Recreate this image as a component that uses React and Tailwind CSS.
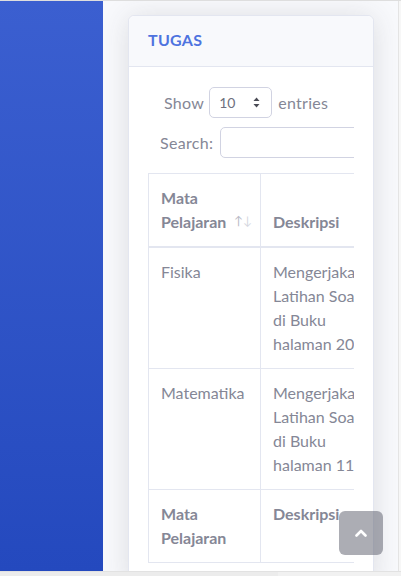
import React from "react";

function SortIcons() {
  return (
    <span className="absolute right-[8px] bottom-[19px] flex text-[12px] leading-none font-normal">
      <span className="text-[#b7b9c6]">↑</span>
      <span className="text-[#d6d8e1]">↓</span>
    </span>
  );
}

function Lines({ lines }) {
  return (
    <div>
      {lines.map((l, i) => (
        <div key={i} className="whitespace-nowrap">
          {l}
        </div>
      ))}
    </div>
  );
}

export default function App() {
  const font = { fontFamily: "Lato, 'Noto Sans', 'Liberation Sans', sans-serif" };
  return (
    <div
      className="w-[401px] h-[576px] overflow-hidden flex flex-col border-t border-[#dedede] bg-[#f8f9fc] text-[16px] text-[#858796]"
      style={font}
    >
      <div className="flex flex-1 min-h-0 relative">
        <div className="w-[103px] shrink-0 bg-gradient-to-b from-[#3b5fd0] to-[#2449be]" />
        <div className="flex-1 min-w-0 flex">
          <div className="flex-1 min-w-0 pl-[25px] pr-[24px] pt-[14px] overflow-hidden">
            <div className="w-[246px] bg-white rounded-[6px] border border-[#e3e6f0] shadow-[0_0.15rem_1.75rem_0_rgba(58,59,69,0.15)]">
              <div className="bg-[#f8f9fc] border-b border-[#e3e6f0] rounded-t-[6px] px-[19px] pt-[11px] pb-[13px] leading-[26px]">
                <span className="text-[#4e73df] font-bold text-[16px] tracking-[0.3px]">TUGAS</span>
              </div>
              <div className="px-[19px] pt-[20px] pb-[20px]">
                <div className="w-[206px] overflow-hidden">
                  <div className="flex items-center pl-[16px] h-[31px]">
                    <span className="tracking-[0.3px]">Show</span>
                    <div className="ml-[5px] w-[63px] h-[31px] border border-[#d1d3e2] rounded-[5px] flex items-center justify-between pl-[9px] pr-[11px] text-[14px] text-[#6e707e]">
                      <span>10</span>
                      <svg width="7" height="11" viewBox="0 0 7 11">
                        <path d="M3.5 0.5 L6.5 4 L0.5 4 Z" fill="#4a4b55" />
                        <path d="M3.5 10.5 L6.5 7 L0.5 7 Z" fill="#4a4b55" />
                      </svg>
                    </div>
                    <span className="ml-[6px] tracking-[0.3px]">entries</span>
                  </div>
                  <div className="flex items-center pl-[12px] mt-[9px] h-[31px]">
                    <span className="whitespace-nowrap tracking-[0.3px]">Search:</span>
                    <div className="ml-[7px] w-[180px] shrink-0 h-[31px] border border-[#d1d3e2] rounded-[5px]" />
                  </div>
                  <table className="mt-[15px] border-collapse border border-[#e3e6f0] w-[300px] table-fixed">
                    <colgroup>
                      <col className="w-[112px]" />
                      <col className="w-[188px]" />
                    </colgroup>
                    <thead>
                      <tr>
                        <th className="relative border border-[#e3e6f0] border-b-2 pl-[12px] pr-[30px] py-[12px] text-left align-bottom font-bold leading-[24px]">
                          <div>Mata</div>
                          <div className="whitespace-nowrap">Pelajaran</div>
                          <SortIcons />
                        </th>
                        <th className="border border-[#e3e6f0] border-b-2 px-[12px] py-[12px] text-left align-bottom font-bold leading-[24px]">
                          Deskripsi
                        </th>
                      </tr>
                    </thead>
                    <tbody className="leading-[24px]">
                      <tr>
                        <td className="border border-[#e3e6f0] px-[12px] py-[12px] align-top">Fisika</td>
                        <td className="border border-[#e3e6f0] px-[12px] py-[12px] align-top">
                          <Lines lines={["Mengerjakan", "Latihan Soal", "di Buku", "halaman 20-25"]} />
                        </td>
                      </tr>
                      <tr>
                        <td className="border border-[#e3e6f0] px-[12px] py-[12px] align-top">Matematika</td>
                        <td className="border border-[#e3e6f0] px-[12px] py-[12px] align-top">
                          <Lines lines={["Mengerjakan", "Latihan Soal", "di Buku", "halaman 112-115"]} />
                        </td>
                      </tr>
                    </tbody>
                    <tfoot className="leading-[24px]">
                      <tr>
                        <th className="border border-[#e3e6f0] px-[12px] py-[12px] text-left align-top font-bold">
                          <div>Mata</div>
                          <div>Pelajaran</div>
                        </th>
                        <th className="border border-[#e3e6f0] px-[12px] py-[12px] text-left align-top font-bold">
                          Deskripsi
                        </th>
                      </tr>
                    </tfoot>
                  </table>
                </div>
              </div>
            </div>
          </div>
          <div className="w-[3px] shrink-0 border-l border-[#e4e4e4] bg-[#f7f7f7]" />
        </div>
        <button className="absolute left-[339px] top-[510px] w-[44px] h-[44px] rounded-[6px] bg-[rgba(90,92,105,0.5)] flex items-center justify-center">
          <svg width="12" height="8" viewBox="0 0 12 8">
            <path d="M1.5 6.5 L6 2 L10.5 6.5" stroke="white" strokeWidth="2.6" fill="none" strokeLinecap="round" strokeLinejoin="round" />
          </svg>
        </button>
      </div>
      <div className="h-[5px] shrink-0 flex border-t border-[#e2e2e2]">
        <div className="w-[278px] bg-[#ececec]" />
        <div className="flex-1 bg-[#f1f1f1]" />
      </div>
    </div>
  );
}
